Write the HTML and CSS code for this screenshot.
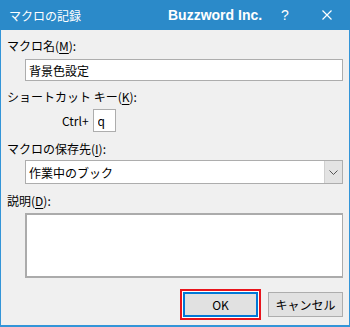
FILE: index.html
```html
<!DOCTYPE html>
<html lang="ja">

<head>
    <meta charset="UTF-8">
    <meta name="viewport" content="width=device-width, initial-scale=1.0">
    <title>マクロの記録</title>
    <link rel="stylesheet" href="styles.css">
</head>

<body>
    <div class="window">
        <header class="titlebar">
            <span class="title">マクロの記録</span>
            <span class="brand">Buzzword Inc.</span>
            <span class="help">?</span>
            <span class="close">
                <svg width="10" height="10" viewBox="0 0 10 10">
                    <path d="M0.5 0.5 L9.5 9.5 M9.5 0.5 L0.5 9.5" stroke="#fff" stroke-width="1.2" fill="none" />
                </svg>
            </span>
        </header>

        <main class="content">
            <p class="label label-name">マクロ名(<u>M</u>):</p>
            <input class="field text-field" type="text" value="背景色設定">

            <p class="label label-key">ショートカット キー(<u>K</u>):</p>
            <div class="shortcut">
                <span>Ctrl+</span>
                <input class="field key-field" type="text" value="q">
            </div>

            <p class="label label-store">マクロの保存先(<u>I</u>):</p>
            <div class="field combo">
                <span class="combo-value">作業中のブック</span>
                <span class="combo-btn">
                    <svg width="9" height="5" viewBox="0 0 9 5">
                        <path d="M0.5 0.5 L4.5 4.5 L8.5 0.5" stroke="#555" stroke-width="1" fill="none" />
                    </svg>
                </span>
            </div>

            <p class="label label-desc">説明(<u>D</u>):</p>
            <textarea class="field memo"></textarea>

            <div class="buttons">
                <button class="btn btn-ok">OK</button>
                <button class="btn">キャンセル</button>
            </div>
        </main>
    </div>
</body>

</html>
```

FILE: styles.css
```css
body {
    margin: 0;
    font-family: "Noto Sans CJK JP", "Noto Sans", sans-serif;
    font-size: 12px;
    color: #000;
}

.window {
    width: 350px;
    height: 327px;
    box-sizing: border-box;
    background-color: #f0f0f0;
    border: 1px solid #3395d8;
    border-top: none;
    border-bottom-width: 2px;
}

.titlebar {
    height: 30px;
    margin: 0 -1px;
    background-color: #2b8ac9;
    color: #fff;
    display: flex;
    align-items: center;
}

.title {
    padding-left: 9px;
    width: 159px;
    font-size: 12px;
}

.brand {
    font-family: "Liberation Sans", Arial, sans-serif;
    font-weight: bold;
    font-size: 14px;
    width: 113px;
}

.help {
    font-family: "Liberation Sans", Arial, sans-serif;
    font-size: 14px;
    width: 41px;
}

.close {
    display: flex;
    align-items: center;
}

.content {
    padding: 8px 6px 0 6px;
}

.label {
    margin: 0;
    line-height: 16px;
    height: 16px;
}

.label u {
    text-decoration-thickness: 1px;
    text-underline-offset: 2px;
}

.field {
    display: block;
    box-sizing: border-box;
    margin: 0 0 0 18px;
    border: 1px solid #adadad;
    background-color: #fff;
    font-family: inherit;
    font-size: 12px;
    color: #000;
    outline: none;
}

.text-field {
    margin-top: 5px;
    width: 318px;
    height: 22px;
    padding: 0 0 0 3px;
}

.label-key {
    margin-top: 8px;
}

.shortcut {
    display: flex;
    align-items: center;
    gap: 4px;
    margin: 4px 0 0 55px;
}

.key-field {
    margin: 0;
    width: 23px;
    height: 23px;
    padding: 0 0 0 4px;
}

.label-store {
    margin-top: 9px;
}

.combo {
    margin-top: 3px;
    width: 318px;
    height: 24px;
    display: flex;
    align-items: center;
    justify-content: space-between;
}

.combo-value {
    padding-left: 3px;
}

.combo-btn {
    width: 17px;
    height: 22px;
    background-color: #e3e3e3;
    border-left: 1px solid #d0d0d0;
    display: flex;
    align-items: center;
    justify-content: center;
}

.label-desc {
    margin-top: 9px;
}

.memo {
    margin-top: 4px;
    width: 318px;
    height: 65px;
    resize: none;
    border-color: #ababab;
    border-width: 2px 1px 2px 2px;
}

.buttons {
    display: flex;
    justify-content: flex-end;
    gap: 10px;
    margin-top: 14px;
}

.btn {
    width: 75px;
    height: 25px;
    box-sizing: border-box;
    background-color: #e1e1e1;
    border: 1px solid #adadad;
    font-family: inherit;
    font-size: 12px;
    color: #000;
    padding: 0;
}

.btn-ok {
    border: 2px solid #0078d7;
    box-shadow: 0 0 0 1px #fff, 0 0 0 3px #e8141c;
}
```
